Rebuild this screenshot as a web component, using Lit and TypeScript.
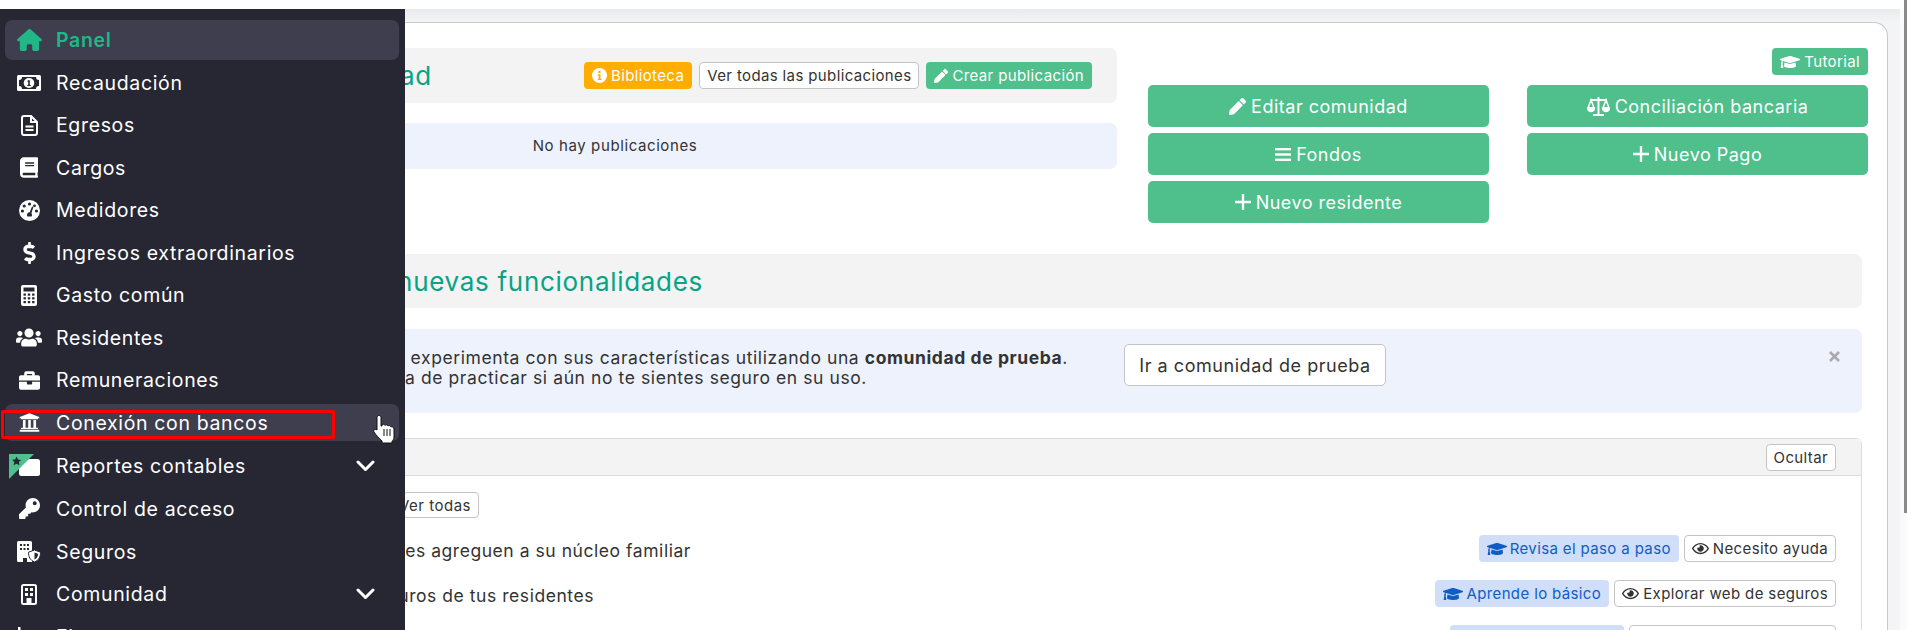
import { LitElement, html, css } from "lit";
import { customElement } from "lit/decorators.js";

const P = (vb: string, d: string, w = 22, h = 22) =>
  html`<svg class="ic" viewBox=${vb} width=${w} height=${h} fill="currentColor"><path d=${d}></path></svg>`;

const D = {
  home: "M575.8 255.5c0 18-15 32.1-32 32.1h-32l.7 160.2c0 2.7-.2 5.4-.5 8.1V472c0 22.1-17.9 40-40 40H456c-1.1 0-2.2 0-3.3-.1c-1.4 .1-2.8 .1-4.2 .1H416 392c-22.1 0-40-17.9-40-40V448 384c0-17.7-14.3-32-32-32H256c-17.7 0-32 14.3-32 32v64 24c0 22.1-17.9 40-40 40H160 128.100c-1.500 0-3-.1-4.500-.2c-1.200 .1-2.400 .2-3.600 .2H104c-22.100 0-40-17.900-40-40V360c0-.9 0-1.900 .1-2.800V287.600H32c-18 0-32-14-32-32.100c0-9 3-17 10-24L266.400 8c7-7 15-8 22-8s15 2 21 7L564.800 231.500c8 7 12 15 11 24z",
  pencil: "M497.9 142.1l-46.1 46.1c-4.7 4.7-12.3 4.7-17 0l-111-111c-4.7-4.7-4.7-12.3 0-17l46.1-46.1c18.7-18.7 49.1-18.7 67.9 0l60.1 60.1c18.8 18.7 18.8 49.1 0 67.9zM284.2 99.8L21.6 362.4.4 483.9c-2.9 16.4 11.4 30.6 27.8 27.8l121.5-21.3 262.6-262.6c4.7-4.7 4.7-12.3 0-17l-111-111c-4.8-4.7-12.4-4.7-17.1 0z",
  cap: "M622.34 153.2L343.4 67.5c-15.2-4.67-31.6-4.67-46.79 0L17.66 153.2c-23.54 7.23-23.54 38.36 0 45.59l48.63 14.94c-10.67 13.19-17.23 29.28-17.88 46.9C38.78 266.15 32 276.11 32 288c0 10.78 5.68 19.85 13.86 25.65L20.33 428.53C18.11 438.52 25.71 448 35.94 448h56.11c10.24 0 17.84-9.48 15.62-19.47L82.14 313.65C90.32 307.85 96 298.78 96 288c0-11.57-6.47-21.25-15.66-26.87.76-15.02 8.44-28.3 20.69-36.72L296.6 285.5c9.06 2.78 26.44 6.25 46.79 0l278.95-85.7c23.55-7.24 23.55-38.36 0-45.6zM352.79 315.09c-28.53 8.76-52.84 3.92-65.59 0l-145.02-44.55L128 384c0 35.35 85.96 64 192 64s192-28.65 192-64l-14.18-113.47-145.03 44.56z",
  eye: "M288 144a110.94 110.94 0 0 0-31.24 5 55.4 55.4 0 0 1 7.24 27 56 56 0 0 1-56 56 55.4 55.4 0 0 1-27-7.24A111.71 111.71 0 1 0 288 144zm284.52 97.4C518.29 135.59 410.93 64 288 64S57.68 135.64 3.48 241.41a32.35 32.35 0 0 0 0 29.19C57.71 376.41 165.07 448 288 448s230.32-71.64 284.52-177.41a32.35 32.35 0 0 0 0-29.19zM288 400c-98.65 0-189.09-55-237.93-144C98.91 167 189.34 112 288 112s189.09 55 237.93 144C477.1 345 386.66 400 288 400z",
  book: "M448 360V24c0-13.3-10.7-24-24-24H96C43 0 0 43 0 96v320c0 53 43 96 96 96h328c13.3 0 24-10.7 24-24v-16c0-7.5-3.5-14.3-8.9-18.7-4.2-15.4-4.2-59.3 0-74.7 5.4-4.3 8.9-11.1 8.9-18.6zM128 134c0-3.3 2.7-6 6-6h212c3.3 0 6 2.7 6 6v20c0 3.3-2.7 6-6 6H134c-3.3 0-6-2.7-6-6v-20zm0 64c0-3.3 2.7-6 6-6h212c3.3 0 6 2.7 6 6v20c0 3.3-2.7 6-6 6H134c-3.3 0-6-2.7-6-6v-20zm253.4 250H96c-17.7 0-32-14.3-32-32 0-17.6 14.4-32 32-32h285.4c-1.9 17.1-1.9 46.9 0 64z",
  dollar: "M209.2 233.4l-108-31.6C88.7 198.2 80 186.5 80 173.5c0-16.3 13.2-29.5 29.5-29.5h66.3c12.2 0 24.2 3.7 34.2 10.5 6.1 4.1 14.3 3.1 19.5-2l34.8-34c7.1-6.9 6.1-18.4-1.8-24.5C238 74.8 207.4 64.1 176 64V16c0-8.8-7.2-16-16-16h-32c-8.8 0-16 7.2-16 16v48h-2.5C45.8 64-5.4 118.7.5 183.6c4.2 46.1 39.4 83.6 83.8 96.6l102.5 30c12.5 3.7 21.2 15.3 21.2 28.3 0 16.3-13.2 29.5-29.5 29.5h-66.3C100 368 88 364.3 78 357.5c-6.1-4.1-14.3-3.1-19.5 2l-34.8 34c-7.1 6.9-6.1 18.4 1.8 24.5 24.5 19.2 55.1 29.9 86.5 30v48c0 8.8 7.2 16 16 16h32c8.8 0 16-7.2 16-16v-48.2c46.6-.9 90.3-28.6 105.7-72.7 21.5-61.6-14.6-124.8-72.5-141.7z",
  users: "M96 224c35.3 0 64-28.7 64-64s-28.7-64-64-64-64 28.7-64 64 28.7 64 64 64zm448 0c35.3 0 64-28.7 64-64s-28.7-64-64-64-64 28.7-64 64 28.7 64 64 64zm32 32h-64c-17.6 0-33.5 7.1-45.1 18.6 40.3 22.1 68.9 62 75.1 109.4h66c17.7 0 32-14.3 32-32v-32c0-35.3-28.7-64-64-64zm-256 0c61.9 0 112-50.1 112-112S381.9 32 320 32 208 82.1 208 144s50.1 112 112 112zm76.8 32h-8.3c-20.8 10-43.9 16-68.5 16s-47.6-6-68.5-16h-8.3C179.6 288 128 339.6 128 403.2V432c0 26.5 21.5 48 48 48h288c26.5 0 48-21.5 48-48v-28.8c0-63.6-51.6-115.2-115.2-115.2zm-223.7-13.4C161.5 263.1 145.6 256 128 256H64c-35.3 0-64 28.7-64 64v32c0 17.7 14.3 32 32 32h65.9c6.3-47.4 34.9-87.3 75.2-109.4z",
  brief: "M320 336c0 8.84-7.16 16-16 16h-96c-8.84 0-16-7.16-16-16v-48H0v144c0 25.6 22.4 48 48 48h416c25.6 0 48-22.4 48-48V288H320v48zm144-208h-80V80c0-25.6-22.4-48-48-48H176c-25.6 0-48 22.4-48 48v48H48c-25.6 0-48 22.4-48 48v80h512v-80c0-25.6-22.4-48-48-48zm-144 0H192V96h128v32z",
  bank: "M496 128v16a8 8 0 0 1-8 8h-24v12c0 6.627-5.373 12-12 12H60c-6.627 0-12-5.373-12-12v-12H24a8 8 0 0 1-8-8v-16a8 8 0 0 1 4.941-7.392l232-88a7.996 7.996 0 0 1 6.118 0l232 88A8 8 0 0 1 496 128zm-24 304H40c-13.255 0-24 10.745-24 24v16a8 8 0 0 0 8 8h464a8 8 0 0 0 8-8v-16c0-13.255-10.745-24-24-24zM96 192v192H60c-6.627 0-12 5.373-12 12v20h416v-20c0-6.627-5.373-12-12-12h-36V192h-64v192h-64V192h-64v192h-64V192H96z",
  key: "M512 176.001C512 273.203 433.202 352 336 352c-11.22 0-22.19-1.062-32.827-3.069l-24.012 27.014A23.999 23.999 0 0 1 261.223 384H224v40c0 13.255-10.745 24-24 24h-40v40c0 13.255-10.745 24-24 24H24c-13.255 0-24-10.745-24-24v-78.059c0-6.365 2.529-12.47 7.029-16.971l161.802-161.802C163.108 213.814 160 195.271 160 176 160 78.798 238.797.001 335.999 0 433.488-.001 512 78.511 512 176.001zM336 128c0 26.51 21.49 48 48 48s48-21.49 48-48-21.49-48-48-48-48 21.49-48 48z",
};

const bg = "#272733";
const money = html`<svg class="ic" width="24" height="16" viewBox="0 0 24 16"><rect width="24" height="16" rx="1.5" fill="#fff"/><rect x="2" y="2" width="20" height="12" fill="${bg}"/><path d="M2 2h3a3 3 0 0 1-3 3zM22 2h-3a3 3 0 0 0 3 3zM2 14h3a3 3 0 0 0-3-3zM22 14h-3a3 3 0 0 1 3-3z" fill="#fff"/><ellipse cx="12" cy="8" rx="5.3" ry="5" fill="#fff"/><path d="M11 5.2h1.8v4.9h1v1h-3.6v-1h1V6.7h-1z" fill="${bg}"/></svg>`;
const file = html`<svg class="ic" width="17" height="21" viewBox="0 0 17 21" fill="none" stroke="#fff" stroke-width="2"><path d="M3 1h7l6 6v11a2 2 0 0 1-2 2H3a2 2 0 0 1-2-2V3a2 2 0 0 1 2-2z"/><path d="M10 1v6h6"/><path d="M4.5 11.5h8M4.5 15h8" stroke-width="1.8"/></svg>`;
const gauge = html`<svg class="ic" width="21" height="21" viewBox="0 0 21 21"><circle cx="10.5" cy="10.5" r="10.5" fill="#fff"/><g fill="${bg}"><circle cx="10.5" cy="4" r="1.6"/><circle cx="5.2" cy="6" r="1.6"/><circle cx="3.4" cy="11" r="1.6"/><circle cx="17.5" cy="11" r="1.6"/><circle cx="15.5" cy="5.8" r="1.4"/><path d="M13 6.5l1.4.5-2 6.2a2.7 2.7 0 0 1 .6 1.7 2.7 2.7 0 0 1-.4 1.6H8.4a2.7 2.7 0 0 1 2.3-4.2z"/></g></svg>`;
const calc = html`<svg class="ic" width="16" height="21" viewBox="0 0 16 21"><rect width="16" height="21" rx="2" fill="#fff"/><g fill="${bg}"><rect x="2.5" y="2.5" width="11" height="4"/><rect x="2.5" y="8.5" width="2.4" height="2.2"/><rect x="6.8" y="8.5" width="2.4" height="2.2"/><rect x="11.1" y="8.5" width="2.4" height="2.2"/><rect x="2.5" y="12.2" width="2.4" height="2.2"/><rect x="6.8" y="12.2" width="2.4" height="2.2"/><rect x="11.1" y="12.2" width="2.4" height="2.2"/><rect x="2.5" y="16" width="2.4" height="2.2"/><rect x="6.8" y="16" width="2.4" height="2.2"/><rect x="11.1" y="16" width="2.4" height="2.2"/></g></svg>`;
const reportes = html`<svg class="ic rep" width="31" height="25" viewBox="0 0 31 25"><rect x="10" y="5" width="21" height="17" rx="2.5" fill="#fff"/><path d="M0 0h25L0 25z" fill="#4fc08d"/><path d="M7.5 2.500l1.500 3 3.200.4-2.300 2.200.6 3.200-3-1.600-2.900 1.500.7-3.200-2.300-2.200 3.200-.4z" fill="${bg}"/></svg>`;
const seguros = html`<svg class="ic" width="24" height="21" viewBox="0 0 24 21"><path d="M1.500 0h12A1.500 1.500 0 0 1 15 1.500V21H10v-4H6v4H1.500A1.500 1.500 0 0 1 0 19.500V1.500A1.500 1.500 0 0 1 1.500 0z" fill="#fff"/><g fill="${bg}"><rect x="3" y="3" width="2" height="2"/><rect x="6.500" y="3" width="2" height="2"/><rect x="10" y="3" width="2" height="2"/><rect x="3" y="7" width="2" height="2"/><rect x="6.500" y="7" width="2" height="2"/><rect x="10" y="7" width="2" height="2"/></g><path d="M17.500 9l6 2.200c0 4.500-1.500 8-6 9.800-4.500-1.800-6-5.300-6-9.800z" fill="#fff" stroke="${bg}" stroke-width="1"/><path d="M17.500 11.500l3.500 1.200c0 2.700-1 4.700-3.500 5.800z" fill="${bg}"/></svg>`;
const comunidad = html`<svg class="ic" width="16" height="21" viewBox="0 0 16 21"><rect x="1" y="1" width="14" height="19" rx="1.500" fill="none" stroke="#fff" stroke-width="2"/><g fill="#fff"><rect x="4" y="4" width="3" height="3"/><rect x="9" y="4" width="3" height="3"/><rect x="4" y="9" width="3" height="3"/><rect x="9" y="9" width="3" height="3"/><rect x="5.500" y="14" width="5" height="6"/></g></svg>`;
const chart = html`<svg class="ic" width="22" height="20" viewBox="0 0 22 20" fill="#fff"><rect x="0" y="0" width="2.500" height="20"/><rect x="5" y="9" width="3" height="8"/><rect x="10" y="5" width="3" height="12"/><rect x="15" y="11" width="3" height="6"/><rect x="0" y="17" width="22" height="2.500"/></svg>`;
const chev = html`<svg class="chev" width="19" height="12" viewBox="0 0 19 12" fill="none" stroke="#fff" stroke-width="3" stroke-linecap="round" stroke-linejoin="round"><path d="M2 2l7.500 7.500L17 2"/></svg>`;

const plus = html`<svg class="bi" width="16" height="16" viewBox="0 0 15 15" fill="none" stroke="currentColor" stroke-width="2.200"><path d="M7.500 0v15M0 7.500h15"/></svg>`;
const bars = html`<svg class="bi" width="16" height="15" viewBox="0 0 16 15" fill="currentColor"><rect width="16" height="2.400" y="1"/><rect width="16" height="2.400" y="6.300"/><rect width="16" height="2.400" y="11.600"/></svg>`;
const scale = html`<svg class="bi" width="23" height="19" viewBox="0 0 23 19" fill="none" stroke="currentColor" stroke-width="1.500"><path d="M11.500 0v17M6 18h11M3 3h17" stroke-width="2"/><path d="M4 3L1 11h6zM19 3l-3 8h6z"/><path d="M0.500 11a3.500 3.500 0 0 0 7 0zM15.500 11a3.500 3.500 0 0 0 7 0z" fill="currentColor"/></svg>`;
const info = html`<svg class="bi" width="15" height="15" viewBox="0 0 15 15"><circle cx="7.500" cy="7.500" r="7.500" fill="#fff"/><path d="M6.300 3h2.200v2H6.300zM5.800 6.300h2.700v4.400h1v1.300H5.700v-1.300h1V7.600h-.9z" fill="#ffad00"/></svg>`;
const cursor = html`<svg class="cursor" width="22" height="30" viewBox="0 0 22 30"><path d="M6 1.500C7.200 1.500 8 2.400 8 3.500V12L9 12V11C9.500 10 11.500 10 12 11.500C12.500 10.500 14.500 10.500 15 12C15.500 11.200 17.500 11.500 18 13C18.500 12.500 21 13 21 15V23C21 25 20 26 19 27.500V29H9V27C6.500 25 3 21 1 18C0 16 2 14.500 4 16L4 3.500C4 2.400 4.800 1.500 6 1.500Z" fill="#fff" stroke="#111" stroke-width="1"/><path d="M11 15v7M14 15v7M17 15v7" stroke="#111" stroke-width="1"/></svg>`;

type Item = { t: string; i: unknown; cls?: string; chev?: boolean };

const items: Item[] = [
  { t: "Panel", i: P("0 0 576 512", D.home, 25, 22), cls: "active" },
  { t: "Recaudación", i: money },
  { t: "Egresos", i: file },
  { t: "Cargos", i: P("0 0 448 512", D.book, 18, 21) },
  { t: "Medidores", i: gauge },
  { t: "Ingresos extraordinarios", i: P("0 0 288 512", D.dollar, 13, 22) },
  { t: "Gasto común", i: calc },
  { t: "Residentes", i: P("0 0 640 512", D.users, 26, 21) },
  { t: "Remuneraciones", i: P("0 0 512 512", D.brief, 21, 21) },
  { t: "Conexión con bancos", i: P("0 0 512 512", D.bank, 21, 21), cls: "hover" },
  { t: "Reportes contables", i: reportes, chev: true },
  { t: "Control de acceso", i: P("0 0 512 512", D.key, 21, 21) },
  { t: "Seguros", i: seguros },
  { t: "Comunidad", i: comunidad, chev: true },
  { t: "Finanzas", i: chart },
];

@customElement("app-side")
export class AppSide extends LitElement {
  static styles = css`
    :host { display: block; position: absolute; left: 0; top: 9px; width: 405px; height: 621px; background: #272733; overflow: hidden; font-family: Inter, "Liberation Sans", sans-serif; }
    nav { display: flex; flex-direction: column; padding: 11px 6px 0 5px; }
    .row { height: 40px; margin-bottom: 2.55px; flex: none; display: flex; align-items: center; color: #fff; font-size: 19.5px; letter-spacing: 0.65px; border-radius: 7px; position: relative; box-sizing: border-box; }
    .slot { width: 48px; margin-right: 3px; flex: none; display: flex; justify-content: center; }
    .ic { display: block; }
    .rep { margin-left: -9px; }
    .active { background: #3e3e4e; color: #20b886; font-weight: 600; }
    .hover { background: #3e3e4e; height: 37px; margin-top: 1.5px; margin-bottom: 5px; }
    .chev { position: absolute; left: 351px; top: 14px; }
    .mark { position: absolute; left: 1px; top: 401px; width: 334px; height: 29px; box-sizing: border-box; border: 3px solid #f00; border-radius: 2px; pointer-events: none; }
    .cursor { position: absolute; left: 373px; top: 405px; }
  `;
  render() {
    return html`<nav>
        ${items.map(
          (it) => html`<div class="row ${it.cls ?? ""}">
            <span class="slot">${it.i}</span><span>${it.t}</span>${it.chev ? chev : ""}
          </div>`
        )}
      </nav>
      <div class="mark"></div>
      ${cursor}`;
  }
}

@customElement("app-root")
export class AppRoot extends LitElement {
  static styles = css`
    :host { display: block; position: relative; width: 1907px; height: 630px; overflow: hidden; background: #fff; font-family: Inter, "Liberation Sans", sans-serif; color: #333; font-size: 15px; }
    .top { height: 9px; background: #fff; }
    .page { height: 621px; box-sizing: border-box; padding: 13px 12px 0 100px; margin-right: 7px; background: linear-gradient(#e8eaee, #f4f4f6 13px); overflow: hidden; }
    .card { background: #fff; border: 1px solid #c9c9c9; border-bottom: 0; border-radius: 14px 14px 0 0; height: 700px; box-sizing: border-box; padding: 25px 25px 0 12px; }
    .upper { display: flex; gap: 31px; margin-right: -6px; margin-bottom: 31px; height: 175px; }
    .pubs { width: 1004px; flex: none; display: flex; flex-direction: column; }
    .head { height: 55px; background: #f3f3f3; border-radius: 7px; display: flex; align-items: center; flex: none; box-sizing: border-box; padding-right: 25px; }
    .clip { display: flex; justify-content: flex-end; overflow: hidden; white-space: nowrap; margin-left: 292px; flex: none; }
    .clip > span { flex: none; }
    .title { font-size: 26px; color: #05a484; letter-spacing: 0.7px; }
    .pub-title { width: 27px; }
    .band .title { width: 298px; }
    .acts { margin-left: auto; display: flex; gap: 7px; }
    .btn { height: 27px; box-sizing: border-box; display: inline-flex; align-items: center; justify-content: center; gap: 4px; padding: 0 7px; border-radius: 4px; font-size: 15px; letter-spacing: 0.37px; white-space: nowrap; border: 1px solid transparent; }
    .orange { background: #ffad00; color: #fff; }
    .green { background: #4fbf8c; color: #fff; }
    .outline { background: #fff; border-color: #c4c4c4; color: #333; }
    .soft { background: #d0def9; color: #0f5cc7; gap: 3px; }
    .empty { margin-top: 20px; height: 46px; background: #eef2fd; border-radius: 7px; display: flex; align-items: center; justify-content: center; letter-spacing: 0.6px; flex: none; padding-bottom: 1px; box-sizing: border-box; }
    .side { flex: 1; display: flex; flex-direction: column; align-items: flex-end; }
    .grid { margin-top: 10px; width: 100%; display: grid; grid-template-columns: 341px 341px; justify-content: space-between; row-gap: 6px; }
    .big { height: 42px; font-size: 18px; letter-spacing: 0.5px; gap: 5px; border-radius: 5px; }
    .band { height: 54px; background: #f3f3f3; border-radius: 7px; display: flex; align-items: center; box-sizing: border-box; }
    .alert { margin-top: 21px; height: 84px; background: #eef2fd; border-radius: 7px; position: relative; box-sizing: border-box; }
    .msg { font-size: 17.5px; line-height: 20px; padding-top: 19px; letter-spacing: 0.59px; }
    .l1 { width: 663px; }
    .l2 { width: 462px; }
    .go { position: absolute; left: 1011px; top: 15px; width: 262px; height: 42px; font-size: 18px; letter-spacing: 0.54px; border-radius: 5px; }
    .close { position: absolute; right: 22px; top: 22px; }
    .panel { margin-top: 25px; border: 1px solid #dcdcdc; border-radius: 6px 6px 0 0; height: 300px; box-sizing: border-box; }
    .ph { height: 37px; background: #f3f3f3; border-bottom: 1px solid #dcdcdc; display: flex; justify-content: flex-end; align-items: center; padding-right: 25px; box-sizing: border-box; }
    .pb { padding: 16px 25px 0 0; }
    .all { display: flex; height: 26px; margin-bottom: 17px; }
    .all .btn { margin-left: 289px; height: 26px; width: 76px; padding: 0 7px 0 0; justify-content: flex-end; letter-spacing: 0.5px; }
    .line { display: flex; align-items: center; height: 27px; margin-bottom: 18px; gap: 5px; }
    .txt { margin-left: 291px; margin-right: auto; font-size: 17.5px; letter-spacing: 0.55px; padding-top: 3px; }
    .t1 { width: 286px; }
    .t2 { width: 189px; }
    .bi { display: block; flex: none; }
    .bar { position: absolute; right: 0; top: 0; width: 3px; height: 513px; background: #8a8a8a; }
    .strip { position: absolute; right: 0; top: 9px; width: 7px; height: 621px; background: #fbfbfb; }
    .w174 { width: 174px; margin-left: auto; }
    .w207 { width: 207px; }
  `;

  render() {
    const capI = html`<svg class="bi" width="20" height="16" viewBox="0 0 640 512" fill="currentColor"><path d=${D.cap}></path></svg>`;
    const eyeI = html`<svg class="bi" width="17" height="15" viewBox="0 0 576 512" fill="currentColor"><path d=${D.eye}></path></svg>`;
    return html`
      <div class="top"></div>
      <div class="page">
        <div class="card">
          <div class="upper">
            <div class="pubs">
              <div class="head">
                <div class="title clip pub-title"><span>Comunidad</span></div>
                <div class="acts">
                  <span class="btn orange">${info}Biblioteca</span>
                  <span class="btn outline">Ver todas las publicaciones</span>
                  <span class="btn green"><svg class="bi" width="14" height="14" viewBox="0 0 512 512" fill="currentColor"><path d=${D.pencil}></path></svg>Crear publicación</span>
                </div>
              </div>
              <div class="empty">No hay publicaciones</div>
            </div>
            <div class="side">
              <span class="btn green">${capI}Tutorial</span>
              <div class="grid">
                <span class="btn big green"><svg class="bi" width="17" height="17" viewBox="0 0 512 512" fill="currentColor"><path d=${D.pencil}></path></svg>Editar comunidad</span>
                <span class="btn big green">${scale}Conciliación bancaria</span>
                <span class="btn big green">${bars}Fondos</span>
                <span class="btn big green">${plus}Nuevo Pago</span>
                <span class="btn big green">${plus}Nuevo residente</span>
              </div>
            </div>
          </div>
          <div class="band"><div class="title clip"><span>Conoce las nuevas funcionalidades</span></div></div>
          <div class="alert">
            <div class="msg">
              <div class="clip l1"><span>Aprende y experimenta con sus características utilizando una <b>comunidad de prueba</b>.</span></div>
              <div class="clip l2"><span>Es una manera de practicar si aún no te sientes seguro en su uso.</span></div>
            </div>
            <span class="btn big outline go">Ir a comunidad de prueba</span>
            <svg class="close" width="11" height="11" viewBox="0 0 11 11" stroke="#a9a9ae" stroke-width="2.600" fill="none"><path d="M1 1l9 9M10 1l-9 9"/></svg>
          </div>
          <div class="panel">
            <div class="ph"><span class="btn outline">Ocultar</span></div>
            <div class="pb">
              <div class="all"><span class="btn outline">Ver todas</span></div>
              <div class="line">
                <div class="txt clip t1"><span>Permite que tus residentes agreguen a su núcleo familiar</span></div>
                <span class="btn soft">${capI}Revisa el paso a paso</span>
                <span class="btn outline">${eyeI}Necesito ayuda</span>
              </div>
              <div class="line">
                <div class="txt clip t2"><span>Gestiona seguros de tus residentes</span></div>
                <span class="btn soft">${capI}Aprende lo básico</span>
                <span class="btn outline">${eyeI}Explorar web de seguros</span>
              </div>
              <div class="line">
                <span class="btn soft w174"></span>
                <span class="btn outline w207"></span>
              </div>
            </div>
          </div>
        </div>
      </div>
      <div class="strip"></div>
      <div class="bar"></div>
      <app-side></app-side>
    `;
  }
}
